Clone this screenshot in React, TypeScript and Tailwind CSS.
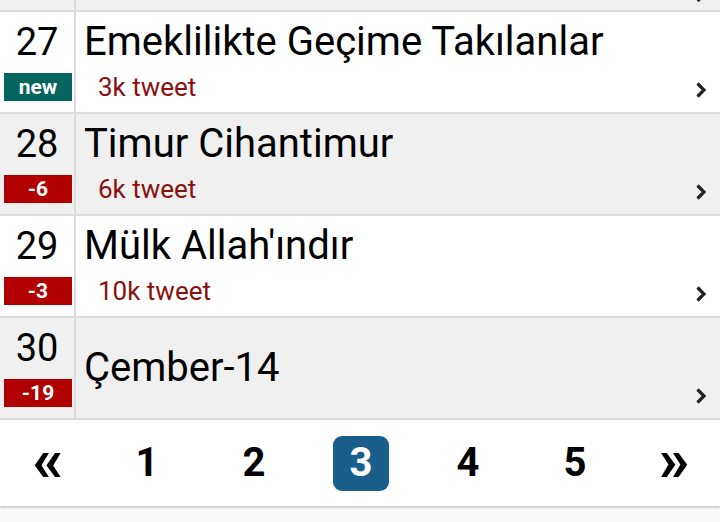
import React from "react";

type Item = {
  rank: number;
  title: string;
  badge: string;
  tweets?: string;
};

const items: Item[] = [
  { rank: 27, title: "Emeklilikte Geçime Takılanlar", badge: "new", tweets: "3k tweet" },
  { rank: 28, title: "Timur Cihantimur", badge: "-6", tweets: "6k tweet" },
  { rank: 29, title: "Mülk Allah'ındır", badge: "-3", tweets: "10k tweet" },
  { rank: 30, title: "Çember-14", badge: "-19" },
];

const Chevron = () => (
  <svg width="14" height="16" viewBox="0 0 14 16" className="absolute right-[12px] bottom-[14px]">
    <path d="M3.5 1.5 L10 8 L3.5 14.5" fill="none" stroke="#222" strokeWidth="3.2" />
  </svg>
);

const Row = ({ item, grey }: { item: Item; grey: boolean }) => (
  <div className={`flex h-[102px] border-b-2 border-[#dcdcdc] ${grey ? "bg-[#f0f0f0]" : "bg-white"}`}>
    <div className="w-[76px] shrink-0 border-r-2 border-[#dcdcdc] flex flex-col items-center">
      <div className="mt-[8px] h-[44px] text-[38px] leading-[44px] text-black">{item.rank}</div>
      <div
        className={`mt-[9px] ml-[2px] w-[68px] h-[28px] flex items-center justify-center text-white font-bold text-[21px] leading-none ${
          item.badge === "new" ? "bg-[#03655d]" : "bg-[#b00000]"
        }`}
      >
        {item.badge}
      </div>
    </div>
    <div
      className={`relative flex-1 flex flex-col pl-[8px] ${item.tweets ? "pt-[8px]" : "justify-center"}`}
    >
      <div className="text-[40px] leading-[44px] text-black whitespace-nowrap">{item.title}</div>
      {item.tweets && (
        <div className="mt-[8px] pl-[14px] text-[26px] leading-[30px] text-[#8a1010]">{item.tweets}</div>
      )}
      <Chevron />
    </div>
  </div>
);

export default function App() {
  const pages = ["1", "2", "3", "4", "5"];
  return (
    <div className="w-[720px] h-[522px] overflow-hidden bg-[#fafafa]" style={{ fontFamily: "Roboto, 'Noto Sans', sans-serif" }}>
      <div className="relative h-[12px] bg-[#f0f0f0] border-b-2 border-[#dcdcdc] flex">
        <div className="w-[76px] border-r-2 border-[#dcdcdc]" />
        <svg width="14" height="4" viewBox="0 0 14 4" className="absolute right-[12px] top-0">
          <path d="M7.5 -3 L3.5 1" fill="none" stroke="#222" strokeWidth="3.2" />
        </svg>
      </div>
      {items.map((it, i) => (
        <Row key={it.rank} item={it} grey={i % 2 === 1} />
      ))}
      <div className="h-[86px] bg-white flex items-center gap-[51px] pl-[28px] shadow-[0_2px_2px_rgba(0,0,0,0.18)]">
        <div className="w-[40px] h-[55px] flex items-center justify-center font-bold text-[62px] leading-none text-black pb-[6px]">
          «
        </div>
        {pages.map((p) => (
          <div
            key={p}
            className={`w-[56px] h-[55px] flex items-center justify-center font-bold text-[40px] leading-none rounded-[9px] ${
              p === "3" ? "bg-[#1a5f8c] text-white" : "text-black"
            }`}
          >
            {p}
          </div>
        ))}
        <div className="w-[40px] h-[55px] flex items-center justify-center font-bold text-[62px] leading-none text-black pb-[6px]">
          »
        </div>
      </div>
    </div>
  );
}
